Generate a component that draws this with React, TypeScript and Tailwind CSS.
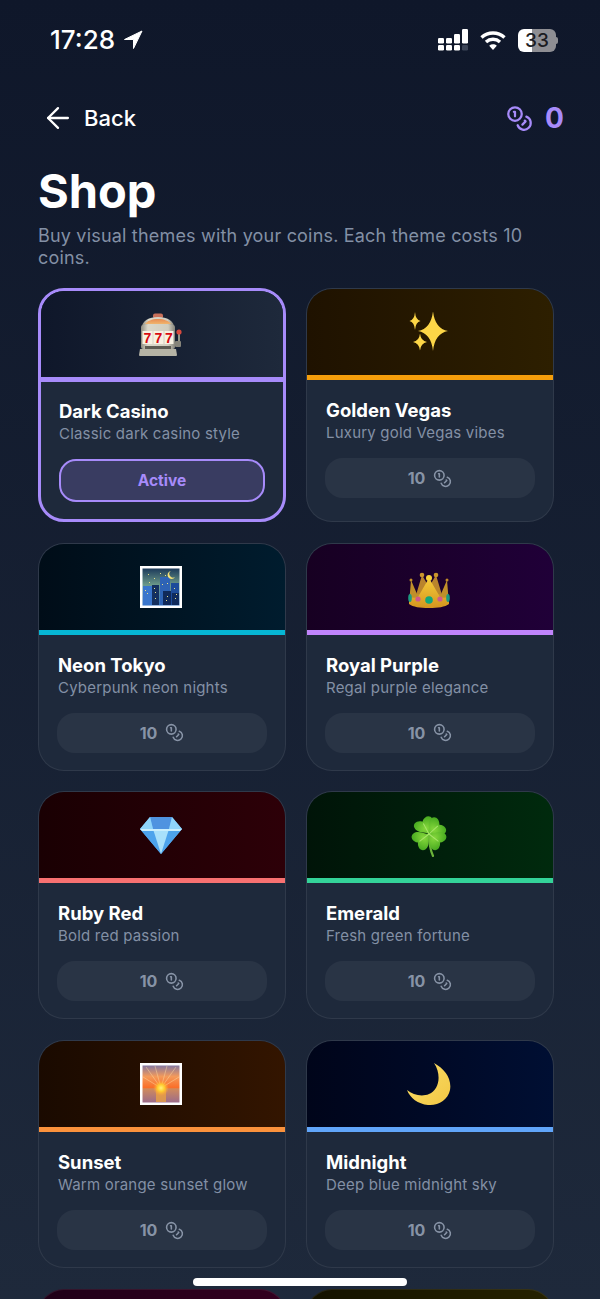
import { ArrowLeft, Coins } from "lucide-react";
import type { ReactNode } from "react";

function SlotEmoji() {
  return (
    <svg viewBox="0 0 44 43" className="h-[43px] w-[44px]">
      <defs>
        <linearGradient id="slotBody" x1="0" y1="0" x2="1" y2="0">
          <stop offset="0" stopColor="#8f8d80" />
          <stop offset="0.2" stopColor="#dbd8ca" />
          <stop offset="0.8" stopColor="#d0cdbf" />
          <stop offset="1" stopColor="#85837a" />
        </linearGradient>
        <linearGradient id="slotDome" x1="0" y1="0" x2="0" y2="1">
          <stop offset="0" stopColor="#e88b52" />
          <stop offset="1" stopColor="#f0b56e" />
        </linearGradient>
      </defs>
      <rect x="14" y="0.500" width="10" height="5" rx="2" fill="#c9705a" />
      <path d="M3 14c0-6 7-10 16-10s16 4 16 10z" fill="url(#slotBody)" />
      <path d="M6 11c2-3 7-5 13-5s11 2 13 5z" fill="url(#slotDome)" />
      <rect x="2" y="12" width="34" height="24" rx="2" fill="url(#slotBody)" />
      <rect x="3.500" y="18" width="10" height="13" fill="#f7f1e2" />
      <rect x="14.500" y="18" width="10" height="13" fill="#f7f1e2" />
      <rect x="25.500" y="18" width="9" height="13" fill="#f7f1e2" />
      <text x="8.500" y="29.500" textAnchor="middle" fontSize="14" fontWeight="700" fontFamily="Liberation Sans, sans-serif" fill="#d80a10">7</text>
      <text x="19.500" y="29.500" textAnchor="middle" fontSize="14" fontWeight="700" fontFamily="Liberation Sans, sans-serif" fill="#d80a10">7</text>
      <text x="30" y="29.500" textAnchor="middle" fontSize="14" fontWeight="700" fontFamily="Liberation Sans, sans-serif" fill="#d80a10">7</text>
      <path d="M1 36h36l1 6a1 1 0 0 1-1 1H1a1 1 0 0 1-1-1z" fill="#b5b3a5" />
      <rect x="6" y="33" width="26" height="3" fill="#5d5b52" />
      <rect x="39" y="20" width="2" height="14" fill="#9a988b" />
      <rect x="36" y="28" width="6" height="6" rx="1" fill="#86847a" />
      <circle cx="40" cy="19" r="2.600" fill="#d84a3e" />
    </svg>
  );
}

function Star({ cx, cy, rx, ry }: { cx: number; cy: number; rx: number; ry: number }) {
  const kx = rx * 0.12;
  const ky = ry * 0.12;
  return (
    <path
      d={`M${cx} ${cy - ry}Q${cx + kx} ${cy - ky} ${cx + rx} ${cy}Q${cx + kx} ${cy + ky} ${cx} ${cy + ry}Q${cx - kx} ${cy + ky} ${cx - rx} ${cy}Q${cx - kx} ${cy - ky} ${cx} ${cy - ry}z`}
      fill="#fdd647"
    />
  );
}

function SparkleEmoji() {
  return (
    <svg viewBox="0 0 42 40" className="h-[40px] w-[42px]">
      <Star cx={25} cy={19} rx={15} ry={20} />
      <Star cx={7} cy={9} rx={5.500} ry={9} />
      <Star cx={12} cy={30} rx={7} ry={8.500} />
    </svg>
  );
}

function CityEmoji() {
  return (
    <svg viewBox="0 0 42 42" className="h-[42px] w-[42px]">
      <defs>
        <linearGradient id="citySky" x1="0" y1="0" x2="0" y2="1">
          <stop offset="0" stopColor="#1c3a5a" />
          <stop offset="0.45" stopColor="#6c9a8a" />
          <stop offset="1" stopColor="#2f6fc0" />
        </linearGradient>
      </defs>
      <rect width="42" height="42" fill="#ffffff" />
      <rect x="2.500" y="2.500" width="37" height="37" fill="url(#citySky)" />
      <rect x="3" y="20" width="9" height="19" fill="#3a76cc" />
      <rect x="12" y="19" width="7" height="20" fill="#14305f" />
      <rect x="20" y="11" width="10" height="28" fill="#2e63b5" />
      <rect x="23" y="25" width="9" height="14" fill="#10295a" />
      <rect x="31" y="17" width="8" height="22" fill="#1d4c9a" />
      <rect x="32" y="27" width="7" height="12" fill="#0f2a5c" />
      <path d="M31 5a4 4 0 1 0 4 6 3.500 3.500 0 0 1-4-6z" fill="#f5e27a" />
      {[[8, 8], [14, 12], [20, 7], [9, 16], [25, 9], [15, 26], [15, 32], [7, 27], [27, 30], [35, 32], [34, 22], [22, 18], [27, 17], [5, 24], [26, 34], [14, 22], [36, 28]].map(([x, y]) => (
        <rect key={`${x}-${y}`} x={x} y={y} width="1" height="1" fill="#e8e08a" />
      ))}
    </svg>
  );
}

function CrownEmoji() {
  return (
    <svg viewBox="0 0 42 42" className="h-[42px] w-[42px]">
      <defs>
        <linearGradient id="crownGold" x1="0" y1="0" x2="0" y2="1">
          <stop offset="0" stopColor="#f5cb3a" />
          <stop offset="1" stopColor="#d4961f" />
        </linearGradient>
      </defs>
      <g transform="translate(0 6)">
        <path d="M14 3l-6 20h26L28 3l-7 12z" fill="#b9842c" />
        <path d="M3 8l6 14h24l6-14 2 24H1z" fill="#c08f2a" />
        <path d="M1 25c4 1 7 1 9 0L21 6l11 19c2 1 5 1 9 0l0 7c-4 3-11 4-20 4S5 35 1 32z" fill="url(#crownGold)" />
        <circle cx="3" cy="8" r="1.500" fill="#c08a28" />
        <circle cx="39" cy="8" r="1.500" fill="#c08a28" />
        <circle cx="14" cy="3" r="2.300" fill="#c9962c" />
        <circle cx="28" cy="3" r="2.300" fill="#c9962c" />
        <circle cx="21" cy="6" r="3" fill="#f7d33c" />
        <ellipse cx="2" cy="26" rx="1.800" ry="4" fill="#1c9a80" />
        <ellipse cx="40" cy="26" rx="1.800" ry="4" fill="#1c9a80" />
        <circle cx="10" cy="27" r="2.600" fill="#cf5a8c" />
        <circle cx="32" cy="27" r="2.600" fill="#cf5a8c" />
        <circle cx="21" cy="28" r="3.800" fill="#12a679" />
      </g>
    </svg>
  );
}

function GemEmoji() {
  return (
    <svg viewBox="0 0 42 38" className="h-[38px] w-[42px]">
      <path d="M10 1h22l10 12-21 25L0 13z" fill="#60b8f5" />
      <path d="M0 13h42l-21 25z" fill="#4da3ec" />
      <path d="M13 13h16l-8 25z" fill="#a8e0fb" />
      <path d="M10 1h22l-3 12H13z" fill="#4f93e0" />
      <path d="M10 1L0 13h13z" fill="#8fd4fa" />
      <path d="M32 1l10 12H29z" fill="#8fd4fa" />
      <path d="M0 13h42l-2 2H2z" fill="#c9eefd" />
    </svg>
  );
}

const cloverLeaf = "M0 0C-3-4-10-6-10-12C-10-17-4-18 0-14C4-18 10-17 10-12C10-6 3-4 0 0z";

function CloverEmoji() {
  return (
    <svg viewBox="0 0 40 44" className="h-[44px] w-[40px]">
      <defs>
        <radialGradient id="cloverFill" cx="50%" cy="60%" r="70%">
          <stop offset="0" stopColor="#86d83c" />
          <stop offset="1" stopColor="#45a81f" />
        </radialGradient>
      </defs>
      <path d="M20 22c0 7 1 14 4 21" stroke="#6bb33a" strokeWidth="2.200" fill="none" strokeLinecap="round" />
      {[-28, 48, 128, 232].map((angle) => (
        <g key={angle} transform={`translate(20 21) rotate(${angle})`}>
          <path d={cloverLeaf} fill="url(#cloverFill)" />
          <path d="M0 0V-12" stroke="#a8e56a" strokeWidth="1" />
        </g>
      ))}
    </svg>
  );
}

function SunsetEmoji() {
  return (
    <svg viewBox="0 0 42 42" className="h-[42px] w-[42px]">
      <defs>
        <linearGradient id="sunsetSky" x1="0" y1="0" x2="0" y2="1">
          <stop offset="0" stopColor="#8578a0" />
          <stop offset="0.3" stopColor="#f49a5a" />
          <stop offset="0.6" stopColor="#fa6e28" />
          <stop offset="0.63" stopColor="#d08a5c" />
          <stop offset="1" stopColor="#9c6c8a" />
        </linearGradient>
        <radialGradient id="sunsetGlow">
          <stop offset="0" stopColor="#fff27a" />
          <stop offset="0.45" stopColor="#ffcb2e" />
          <stop offset="1" stopColor="#ff9a3c" stopOpacity="0" />
        </radialGradient>
      </defs>
      <rect width="42" height="42" fill="#ffffff" />
      <rect x="2.500" y="2.500" width="37" height="37" fill="url(#sunsetSky)" />
      <path d="M21 25L6 4M21 25L15 3M21 25L27 3M21 25L36 4M21 25L3 14M21 25L39 14" stroke="#ffd9a0" strokeWidth="0.800" opacity="0.600" />
      <rect x="16" y="26" width="10" height="13" fill="#f2a63c" opacity="0.700" />
      <circle cx="21" cy="25" r="8" fill="url(#sunsetGlow)" />
    </svg>
  );
}

function MoonEmoji() {
  return (
    <svg viewBox="0 0 44 43" className="h-[43px] w-[44px]">
      <defs>
        <linearGradient id="moonFill" x1="0" y1="0" x2="1" y2="1">
          <stop offset="0" stopColor="#fbe06a" />
          <stop offset="1" stopColor="#f2c744" />
        </linearGradient>
      </defs>
      <path d="M27 0C38 6 45 16 43 27C41 37 31 43 21 42C11 41 3 35 0 27C6 32 15 34 22 31C32 27 35 12 27 0z" fill="url(#moonFill)" />
    </svg>
  );
}

function SignalIcon() {
  return (
    <svg viewBox="0 0 30 22" className="h-[22px] w-[30px]" fill="#ffffff">
      <rect x="0" y="9" width="6" height="5.500" rx="1.200" />
      <rect x="0" y="16" width="6" height="5.500" rx="1.200" />
      <rect x="8" y="9" width="6" height="5.500" rx="1.200" />
      <rect x="8" y="16" width="6" height="5.500" rx="1.200" />
      <rect x="16" y="5" width="6" height="9.500" rx="1.200" />
      <rect x="16" y="16" width="6" height="5.500" rx="1.200" />
      <rect x="24" y="0" width="6" height="14.500" rx="1.200" />
      <rect x="24" y="16" width="6" height="5.500" rx="1.200" fill="#3b4457" />
    </svg>
  );
}

function WifiIcon() {
  return (
    <svg viewBox="0 0 26 20" className="h-[20px] w-[26px]" fill="none" stroke="#ffffff" strokeWidth="3.400">
      <path d="M1.500 7.500c6.500-6 16.500-6 23 0" />
      <path d="M6 12c4-3.600 10-3.600 14 0" />
      <path d="M13 20l-3.800-4.300c2.200-1.800 5.400-1.800 7.600 0z" fill="#ffffff" stroke="none" />
    </svg>
  );
}

type Theme = {
  name: string;
  desc: string;
  emoji: ReactNode;
  header: string;
  stripe: string;
  active?: boolean;
};

const themes: Theme[] = [
  { name: "Dark Casino", desc: "Classic dark casino style", emoji: <SlotEmoji />, header: "bg-gradient-to-r from-[#0f172a] to-[#1e293b]", stripe: "bg-[#a78bfa]", active: true },
  { name: "Golden Vegas", desc: "Luxury gold Vegas vibes", emoji: <SparkleEmoji />, header: "bg-gradient-to-r from-[#1f1200] to-[#2d1f00]", stripe: "bg-[#f59e0b]" },
  { name: "Neon Tokyo", desc: "Cyberpunk neon nights", emoji: <CityEmoji />, header: "bg-gradient-to-r from-[#000d18] to-[#001c2e]", stripe: "bg-[#06b6d4]" },
  { name: "Royal Purple", desc: "Regal purple elegance", emoji: <CrownEmoji />, header: "bg-gradient-to-r from-[#170022] to-[#200038]", stripe: "bg-[#c084fc]" },
  { name: "Ruby Red", desc: "Bold red passion", emoji: <GemEmoji />, header: "bg-gradient-to-r from-[#1a0003] to-[#2d0008]", stripe: "bg-[#f87171]" },
  { name: "Emerald", desc: "Fresh green fortune", emoji: <CloverEmoji />, header: "bg-gradient-to-r from-[#001408] to-[#002a0d]", stripe: "bg-[#34d399]" },
  { name: "Sunset", desc: "Warm orange sunset glow", emoji: <SunsetEmoji />, header: "bg-gradient-to-r from-[#1a0a00] to-[#331500]", stripe: "bg-[#fb923c]" },
  { name: "Midnight", desc: "Deep blue midnight sky", emoji: <MoonEmoji />, header: "bg-gradient-to-r from-[#00051a] to-[#000f33]", stripe: "bg-[#60a5fa]" },
];

function ThemeCard({ theme }: { theme: Theme }) {
  if (theme.active) {
    return (
      <div className="overflow-hidden rounded-[26px] border-[3px] border-[#a78bfa] bg-[#1e293b]">
        <div className={`flex h-[86px] items-center justify-center pr-[3px] ${theme.header}`}>{theme.emoji}</div>
        <div className={`h-[5px] ${theme.stripe}`} />
        <div className="px-[18px] pt-[16px] pb-[17px]">
          <p className="text-[18.500px] leading-[26px] font-bold text-white">{theme.name}</p>
          <p className="text-[15px] leading-[20px] tracking-[0.2px] text-[#8390a5]">{theme.desc}</p>
          <div className="mt-[15px] flex h-[43px] items-center justify-center rounded-[17px] border-2 border-[#a78bfa] bg-[#a78bfa]/20 text-[15.500px] font-bold text-[#a78bfa]">
            Active
          </div>
        </div>
      </div>
    );
  }
  return (
    <div className="overflow-hidden rounded-[26px] border border-white/[0.08] bg-[#1e293b]">
      <div className={`flex h-[86px] items-center justify-center pr-[3px] ${theme.header}`}>{theme.emoji}</div>
      <div className={`h-[5px] ${theme.stripe}`} />
      <div className="px-[19px] pt-[17px] pb-[17px]">
        <p className="text-[18.500px] leading-[26px] font-bold text-white">{theme.name}</p>
        <p className="text-[15px] leading-[20px] tracking-[0.2px] text-[#8390a5]">{theme.desc}</p>
        <div className="-mx-[1px] mt-[15px] flex h-[40px] items-center justify-center gap-[8px] rounded-[18px] bg-white/[0.05] text-[16px] font-bold text-[#8793a6]">
          10
          <Coins size={19} strokeWidth={2} />
        </div>
      </div>
    </div>
  );
}

export default function App() {
  return (
    <div className="relative h-[1299px] overflow-hidden bg-gradient-to-b from-[#0f172a] to-[#1e293b] font-['Inter',sans-serif] text-white">
      <div className="flex h-[80px] items-center justify-between pr-[42px] pl-[50px]">
        <div className="flex items-center gap-[8px]">
          <span className="text-[26px] leading-none font-medium">17:28</span>
          <svg viewBox="0 0 20 20" className="h-[20px] w-[20px]">
            <path d="M19 1L1.500 9.500H10.500V18.500z" fill="#ffffff" stroke="#ffffff" strokeWidth="1" strokeLinejoin="round" />
          </svg>
        </div>
        <div className="flex items-center gap-[12px]">
          <SignalIcon />
          <WifiIcon />
          <div className="flex items-center">
            <div className="flex h-[23px] w-[38px] items-center justify-center rounded-[6px] bg-gradient-to-r from-white from-[37%] to-[#8e8e93] to-[37%] text-[19px] leading-none font-medium text-[#1c1c22]">
              33
            </div>
            <div className="h-[7px] w-[2px] rounded-r-full bg-[#8e8e93]" />
          </div>
        </div>
      </div>

      <div className="mt-[16px] flex h-[44px] items-center justify-between pr-[36px] pl-[41px]">
        <div className="flex items-center gap-[9px]">
          <ArrowLeft size={34} strokeWidth={1.600} />
          <span className="text-[22px] font-medium">Back</span>
        </div>
        <div className="flex items-center gap-[12px] text-[#a78bfa]">
          <Coins size={27} strokeWidth={2} />
          <span className="text-[28px] font-bold">0</span>
        </div>
      </div>

      <div className="px-[38px]">
        <h1 className="mt-[23px] text-[47px] leading-[56px] font-bold">Shop</h1>
        <p className="mt-[6px] text-[18px] leading-[22px] tracking-[0.19px] text-[#8390a5]">
          Buy visual themes with your coins. Each theme costs 10 coins.
        </p>

        <div className="mt-[19px] grid grid-cols-[248px_248px] gap-x-[20px] gap-y-[20.700px]">
          {themes.map((theme) => (
            <ThemeCard key={theme.name} theme={theme} />
          ))}
          <div className="h-[86px] overflow-hidden rounded-t-[26px] border border-white/[0.08] bg-gradient-to-r from-[#1f0018] to-[#33001f]" />
          <div className="h-[86px] overflow-hidden rounded-t-[26px] border border-white/[0.08] bg-gradient-to-r from-[#141200] to-[#262200]" />
        </div>
      </div>

      <div className="absolute bottom-[13px] left-[193px] h-[8px] w-[214px] rounded-full bg-white" />
    </div>
  );
}
